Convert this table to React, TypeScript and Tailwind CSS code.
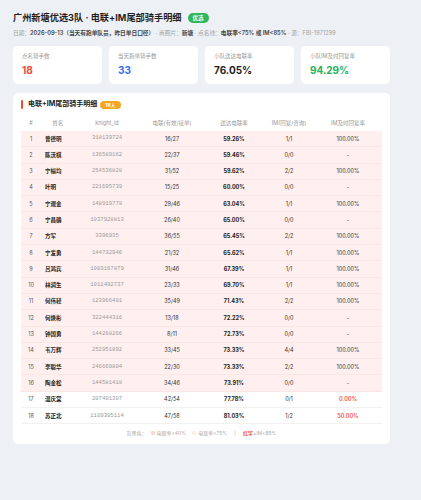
import React from 'react'

const font = { fontFamily: 'Inter, "Noto Sans CJK SC", "Noto Sans", sans-serif' }

const rows = [
  ['1', '曾德明', '318139724', '16/27', '59.26%', '1/1', '100.00%'],
  ['2', '陈沃棋', '136589162', '22/37', '59.46%', '0/0', '-'],
  ['3', '宁榆均', '254536828', '31/52', '59.62%', '2/2', '100.00%'],
  ['4', '叶明', '221695739', '15/25', '60.00%', '0/0', '-'],
  ['5', '宁观金', '148919778', '29/46', '63.04%', '1/1', '100.00%'],
  ['6', '宁昌确', '1037928813', '26/40', '65.00%', '0/0', '-'],
  ['7', '方军', '3396935', '36/55', '65.45%', '2/2', '100.00%'],
  ['8', '宁发勇', '144732946', '21/32', '65.62%', '1/1', '100.00%'],
  ['9', '吕鸿宾', '1003167879', '31/46', '67.39%', '1/1', '100.00%'],
  ['10', '林润生', '1011492737', '23/33', '69.70%', '1/1', '100.00%'],
  ['11', '何伟轻', '123966401', '35/49', '71.43%', '2/2', '100.00%'],
  ['12', '何焕彬', '322444316', '13/18', '72.22%', '0/0', '-'],
  ['13', '钟国勇', '144268266', '8/11', '72.73%', '0/0', '-'],
  ['14', '韦万辉', '252951892', '33/45', '73.33%', '4/4', '100.00%'],
  ['15', '李聪华', '246669804', '22/30', '73.33%', '2/2', '100.00%'],
  ['16', '陶金松', '144581418', '34/46', '73.91%', '0/0', '-'],
  ['17', '温庆棠', '207491307', '42/54', '77.78%', '0/1', '0.00%'],
  ['18', '苏正北', '1109305114', '47/58', '81.03%', '1/2', '50.00%'],
]

const cols = 'grid grid-cols-[20px_34px_64px_66px_58px_52px_66px] items-center'

const StatCard = ({ label, value, color }: any) => (
  <div className="bg-white rounded-[5px] h-[38px] pl-[9px] pt-[6px]">
    <div className="text-[5.5px] leading-[8px] text-[#999]">{label}</div>
    <div className={`text-[10px] leading-[13px] font-bold mt-[4px] ${color}`}>{value}</div>
  </div>
)

export default function App() {
  return (
    <div className="min-h-screen w-full bg-[#edf0f5] pl-[13px] pt-[11px]" style={font}>
      <div className="w-[377px]">
        {/* title */}
        <div className="flex items-center gap-[6px] h-[14px]">
          <h1 className="text-[9.2px] leading-[14px] font-bold text-[#1f1f1f]">广州新塘优选3队 · 电联+IM尾部骑手明细</h1>
          <span className="bg-[#2fb65c] text-white text-[5.5px] font-bold rounded-full px-[5px] h-[10px] leading-[10px]">优选</span>
        </div>
        <div className="mt-[3px] h-[9px] leading-[9px] text-[5.7px] text-[#a3a3a3] whitespace-nowrap">
          日期：<span className="text-[#444] font-semibold">2026-09-13（当天有跑单队员，昨日单日口径）</span>
          {' · 商圈片：'}<span className="text-[#444] font-semibold">新塘</span>
          {' · 点名线：'}<span className="text-[#444] font-semibold">电联率&lt;75% 或 IM&lt;85%</span>
          {' · 源：FBI-1971299'}
        </div>

        {/* stat cards */}
        <div className="grid grid-cols-4 gap-[7px] mt-[9px]">
          <StatCard label="点名骑手数" value="18" color="text-[#f04a3a]" />
          <StatCard label="当天跑单骑手数" value="33" color="text-[#2f6bf0]" />
          <StatCard label="小队送达电联率" value="76.05%" color="text-[#1f1f1f]" />
          <StatCard label="小队IM及时回复率" value="94.29%" color="text-[#26b25a]" />
        </div>

        {/* table card */}
        <div className="bg-white rounded-[5px] mt-[9px] px-[8px] pt-[7px] pb-[5px]">
          <div className="flex items-center h-[9px]">
            <span className="w-[2px] h-[9px] bg-[#f04a3a] rounded-sm" />
            <span className="ml-[5px] text-[7px] font-bold text-[#222]">电联+IM尾部骑手明细</span>
            <span className="ml-[3px] bg-[#f5a623] text-white text-[5px] font-bold rounded-full px-[5px] h-[8px] leading-[8px]">18人</span>
          </div>

          <div className={`${cols} mt-[6px] h-[16px] text-[5.5px] text-[#999] text-center`}>
            <div>#</div>
            <div>姓名</div>
            <div>knight_id</div>
            <div>电联(有效/接单)</div>
            <div>送达电联率</div>
            <div>IM(回复/咨询)</div>
            <div>IM及时回复率</div>
          </div>

          {rows.map((r, i) => {
            const pink = i < 16
            const red = i >= 16
            return (
              <div
                key={r[0]}
                className={`${cols} h-[16.3px] text-[5.5px] text-center border-b ${
                  pink ? 'bg-[#fff0ef] border-[#fbe6e4]' : 'bg-white border-[#f1f1f1]'
                }`}
              >
                <div className="text-[#555]">{r[0]}</div>
                <div className="text-left pl-[4px] font-bold text-[#222]">{r[1]}</div>
                <div className="text-[#9a9a9a] text-[5.6px]" style={{ fontFamily: '"Liberation Mono", monospace' }}>
                  {r[2]}
                </div>
                <div className="text-[#333]">{r[3]}</div>
                <div className="font-bold text-[#222]">{r[4]}</div>
                <div className="text-[#333]">{r[5]}</div>
                <div className={red ? 'text-[#f04a3a] font-semibold' : 'text-[#333]'}>{r[6]}</div>
              </div>
            )
          })}

          <div className="mt-[3px] h-[12px] flex items-center justify-center gap-[4px] text-[5px] text-[#aaa]">
            <span>背景色：</span>
            <span className="flex items-center gap-[2px]">
              <span className="w-[4px] h-[4px] bg-[#fdd6d0] rounded-[1px]" />
              电联率&lt;40%
            </span>
            <span className="flex items-center gap-[2px] ml-[2px]">
              <span className="w-[4px] h-[4px] bg-[#fdecea] rounded-[1px]" />
              电联率&lt;75%
            </span>
            <span className="mx-[3px]">|</span>
            <span>
              <span className="text-[#f04a3a] font-bold">红字</span>=IM&lt;85%
            </span>
          </div>
        </div>
      </div>
    </div>
  )
}
